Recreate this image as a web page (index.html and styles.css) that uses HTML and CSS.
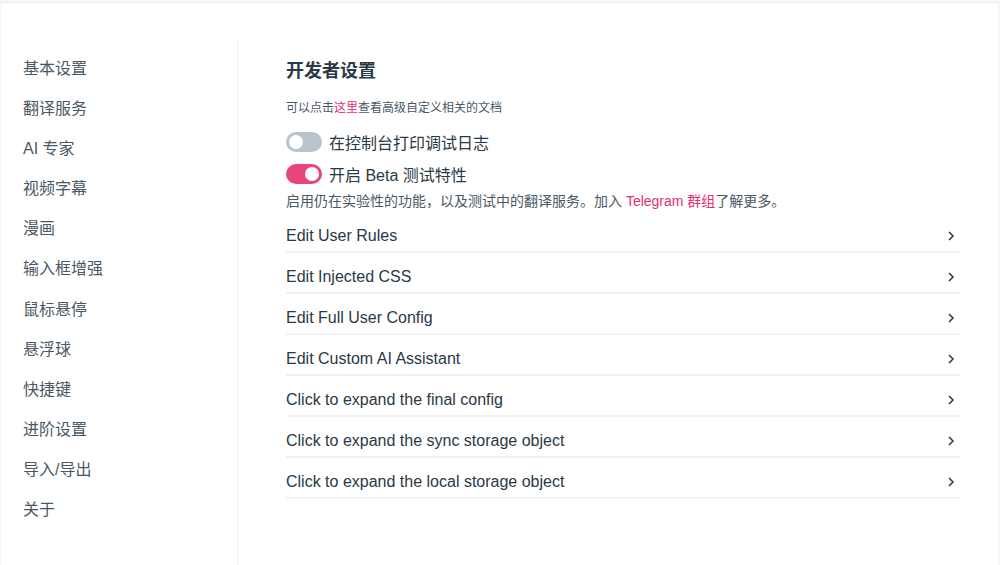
FILE: index.html
```html
<!DOCTYPE html>
<html lang="zh">
<head>
<meta charset="utf-8">
<link rel="stylesheet" href="styles.css">
</head>
<body>
<div class="frame">
  <div class="layout">
    <nav class="sidebar">
      <a class="nav-item">基本设置</a>
      <a class="nav-item">翻译服务</a>
      <a class="nav-item">AI 专家</a>
      <a class="nav-item">视频字幕</a>
      <a class="nav-item">漫画</a>
      <a class="nav-item">输入框增强</a>
      <a class="nav-item">鼠标悬停</a>
      <a class="nav-item">悬浮球</a>
      <a class="nav-item">快捷键</a>
      <a class="nav-item">进阶设置</a>
      <a class="nav-item">导入/导出</a>
      <a class="nav-item">关于</a>
    </nav>
    <main class="content">
      <h2 class="title">开发者设置</h2>
      <p class="hint">可以点击<a class="link">这里</a>查看高级自定义相关的文档</p>
      <label class="toggle-row">
        <span class="switch"><span class="knob"></span></span>
        <span class="toggle-label">在控制台打印调试日志</span>
      </label>
      <label class="toggle-row">
        <span class="switch on"><span class="knob"></span></span>
        <span class="toggle-label">开启 Beta 测试特性</span>
      </label>
      <p class="desc">启用仍在实验性的功能，以及测试中的翻译服务。加入 <a class="link">Telegram 群组</a>了解更多。</p>
      <ul class="list">
        <li class="row"><span>Edit User Rules</span><svg class="chev" viewBox="0 0 10 12"><path d="M3 2l4 4-4 4"/></svg></li>
        <li class="row"><span>Edit Injected CSS</span><svg class="chev" viewBox="0 0 10 12"><path d="M3 2l4 4-4 4"/></svg></li>
        <li class="row"><span>Edit Full User Config</span><svg class="chev" viewBox="0 0 10 12"><path d="M3 2l4 4-4 4"/></svg></li>
        <li class="row"><span>Edit Custom AI Assistant</span><svg class="chev" viewBox="0 0 10 12"><path d="M3 2l4 4-4 4"/></svg></li>
        <li class="row"><span>Click to expand the final config</span><svg class="chev" viewBox="0 0 10 12"><path d="M3 2l4 4-4 4"/></svg></li>
        <li class="row"><span>Click to expand the sync storage object</span><svg class="chev" viewBox="0 0 10 12"><path d="M3 2l4 4-4 4"/></svg></li>
        <li class="row"><span>Click to expand the local storage object</span><svg class="chev" viewBox="0 0 10 12"><path d="M3 2l4 4-4 4"/></svg></li>
      </ul>
    </main>
  </div>
</div>
</body>
</html>
```

FILE: styles.css
```css
* { box-sizing: border-box; }
html, body { margin: 0; padding: 0; height: 100%; }
body {
  background: #f6f6f7;
  font-family: "Liberation Sans", "Noto Sans CJK SC", sans-serif;
  color: #415462;
  padding: 2px 2px 0 1px;
}
.frame {
  background: #fff;
  height: 100%;
  border-top: 1px solid #ececee;
  padding-top: 36px;
}
.layout {
  display: flex;
  height: 100%;
}
.sidebar {
  width: 237px;
  flex-shrink: 0;
  border-right: 1px solid #f0f1f2;
  display: flex;
  flex-direction: column;
  padding: 18px 0 0 22px;
}
.nav-item {
  display: block;
  font-size: 16px;
  line-height: 24px;
  height: 40.1px;
  color: #4a5866;
}
.content {
  flex: 1;
  padding: 19px 38px 0 48px;
}
.title {
  margin: 0;
  font-size: 18px;
  line-height: 26px;
  font-weight: 700;
  color: #2a3946;
}
.hint {
  margin: 14px 0 0;
  font-size: 12px;
  line-height: 20px;
  color: #4a5866;
}
.link { color: #e5306f; }
.toggle-row {
  display: flex;
  align-items: center;
  height: 32px;
  gap: 7px;
}
.hint + .toggle-row { margin-top: 8px; }
.switch {
  width: 36px;
  height: 20px;
  border-radius: 10px;
  background: #b8c3cc;
  position: relative;
  flex-shrink: 0;
}
.switch .knob {
  position: absolute;
  top: 3px;
  left: 3px;
  width: 14px;
  height: 14px;
  border-radius: 50%;
  background: #fff;
}
.switch.on { background: #e8457c; }
.switch.on .knob { left: 19px; }
.toggle-label {
  font-size: 16px;
  color: #2a3946;
}
.desc {
  margin: 1px 0 0;
  font-size: 14px;
  line-height: 20px;
  color: #4a5866;
}
.list {
  list-style: none;
  margin: 1px 0 0;
  padding: 0;
  width: 674px;
}
.row {
  display: flex;
  justify-content: space-between;
  align-items: center;
  height: 41px;
  line-height: 20px;
  padding: 14px 4px 5px 0;
  border-bottom: 2px solid #f0f2f4;
  font-size: 16px;
  color: #2a3946;
}
.chev {
  width: 10px;
  height: 12px;
  fill: none;
  stroke: #2a3946;
  stroke-width: 1.5;
}
```
